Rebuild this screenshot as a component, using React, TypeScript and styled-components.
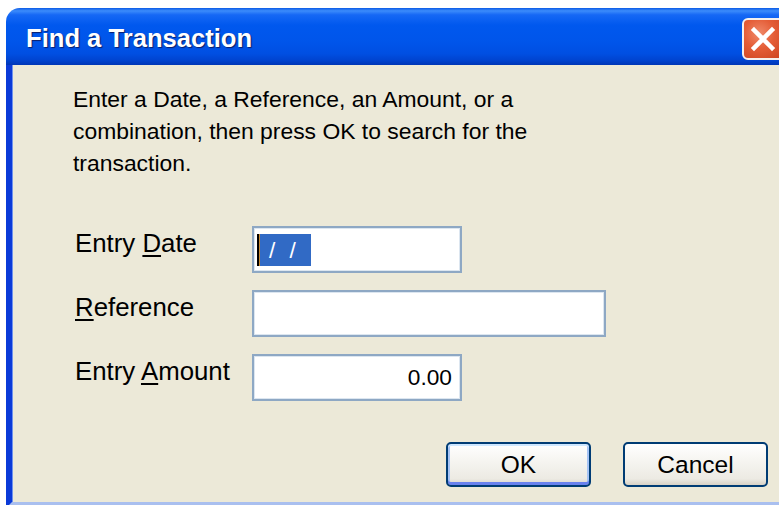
import React from "react";
import styled, { createGlobalStyle } from "styled-components";

const Global = createGlobalStyle`
  html, body {
    margin: 0;
    padding: 0;
    background: #ffffff;
    overflow: hidden;
  }
  body {
    font-family: "Liberation Sans", Arial, sans-serif;
  }
`;

const Window = styled.div`
  margin: 8px 0 0 6px;
  width: 790px;
  display: flex;
  flex-direction: column;
`;

const TitleBar = styled.div`
  height: 57px;
  box-sizing: border-box;
  padding: 4px 12px 0 20px;
  display: flex;
  align-items: center;
  justify-content: space-between;
  border-radius: 14px 14px 0 0;
  background: linear-gradient(
    to bottom,
    #0a5ae6 0%,
    #3c8cfb 5%,
    #1668f5 12%,
    #0058ee 30%,
    #0055ea 60%,
    #004fe2 80%,
    #0043cf 92%,
    #0036b6 100%
  );
`;

const Title = styled.span`
  color: #ffffff;
  font-family: "Liberation Sans", Arial, sans-serif;
  font-weight: bold;
  font-size: 25.6px;
  text-shadow: 1px 1px 1px #0a1e6a;
`;

const CloseButton = styled.div`
  width: 42px;
  height: 42px;
  box-sizing: border-box;
  border: 2px solid #f4f0ee;
  border-radius: 6px;
  background: radial-gradient(
    circle at 40% 35%,
    #f08a6a 0%,
    #e45d37 45%,
    #cc4420 100%
  );
  display: flex;
  align-items: center;
  justify-content: center;
`;

const Body = styled.div`
  height: 443px;
  box-sizing: border-box;
  background: #ece9d8;
  border-left: 6px solid #0a3ad8;
  border-right: 6px solid #0a3ad8;
  border-bottom: 6px solid #a9bfef;
  box-shadow: inset 1px 0 0 #6f92ee;
  padding: 18px 22px 0 61px;
  display: flex;
  flex-direction: column;
`;

const Intro = styled.p`
  margin: 0;
  width: 470px;
  font-size: 22.9px;
  line-height: 32px;
  color: #000000;
`;

const Form = styled.div`
  margin-top: 47px;
  display: grid;
  grid-template-columns: 179px auto;
  row-gap: 17px;
  align-items: start;
`;

const Label = styled.label`
  padding-left: 2px;
  font-size: 25.8px;
  line-height: 34px;
  color: #000000;
`;

const Key = styled.span`
  text-decoration: underline;
  text-underline-offset: 3px;
`;

const Field = styled.div<{ $width: number; $align?: "left" | "right" }>`
  width: ${(p) => p.$width}px;
  height: 47px;
  box-sizing: border-box;
  border: 2px solid #8ea8c4;
  box-shadow: inset 0 0 0 1px #dce6f0;
  background: #ffffff;
  display: flex;
  align-items: center;
  justify-content: ${(p) => (p.$align === "right" ? "flex-end" : "flex-start")};
  padding: 0 8px 0 3px;
  font-size: 22.7px;
  color: #000000;
`;

const Caret = styled.span`
  width: 3px;
  height: 32px;
  background: linear-gradient(to right, #000000 0 2px, #c88a30 2px 3px);
`;

const Selection = styled.span`
  width: 51px;
  height: 32px;
  box-sizing: border-box;
  padding-left: 9px;
  background: #316ac5;
  color: #ffffff;
  font-size: 22.7px;
  line-height: 32px;
  letter-spacing: 4px;
  white-space: pre;
`;

const Buttons = styled.div`
  margin-top: 41px;
  display: flex;
  justify-content: flex-end;
  gap: 32px;
`;

const Button = styled.button<{ $default?: boolean }>`
  width: 145px;
  height: 45px;
  box-sizing: border-box;
  border: 2px solid #003c74;
  border-radius: 5px;
  background: linear-gradient(
    to bottom,
    #ffffff 0%,
    #f6f5f1 40%,
    #eceae3 85%,
    #d8d2c6 100%
  );
  box-shadow: ${(p) =>
    p.$default
      ? "inset 0 2px 0 #cee7ff, inset 0 -3px 0 #6982ee, inset 2px 0 0 #a6c4f5, inset -2px 0 0 #a6c4f5"
      : "none"};
  font-family: "Liberation Sans", Arial, sans-serif;
  font-size: 24.5px;
  color: #000000;
  padding: 0;
`;

export default function App() {
  return (
    <>
      <Global />
      <Window>
        <TitleBar>
          <Title>Find a Transaction</Title>
          <CloseButton>
            <svg width="26" height="26" viewBox="0 0 26 26">
              <path
                d="M4 4 L22 22 M22 4 L4 22"
                stroke="#ffffff"
                strokeWidth="4.5"
                strokeLinecap="square"
              />
            </svg>
          </CloseButton>
        </TitleBar>
        <Body>
          <Intro>
            Enter a Date, a Reference, an Amount, or a combination, then press
            OK to search for the transaction.
          </Intro>
          <Form>
            <Label>
              Entry <Key>D</Key>ate
            </Label>
            <Field $width={210}>
              <Caret />
              <Selection>/ /</Selection>
            </Field>
            <Label>
              <Key>R</Key>eference
            </Label>
            <Field $width={354} />
            <Label>
              Entry <Key>A</Key>mount
            </Label>
            <Field $width={210} $align="right">
              0.00
            </Field>
          </Form>
          <Buttons>
            <Button $default>OK</Button>
            <Button>Cancel</Button>
          </Buttons>
        </Body>
      </Window>
    </>
  );
}
